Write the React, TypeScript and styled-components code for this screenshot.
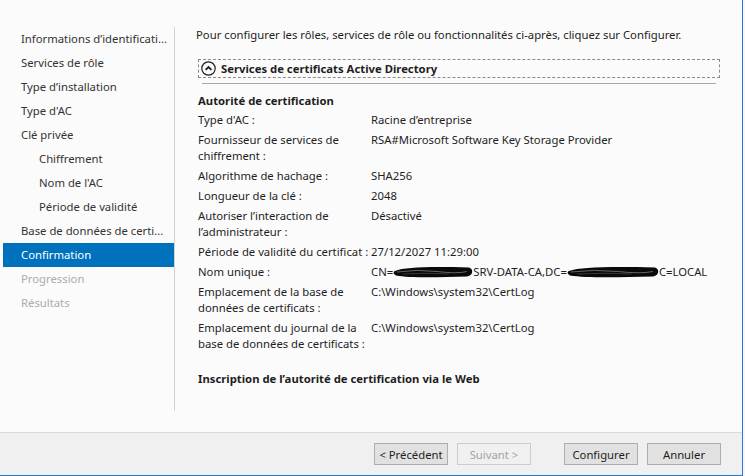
import React from 'react';
import styled, { createGlobalStyle } from 'styled-components';

const GlobalStyle = createGlobalStyle`
  html, body {
    margin: 0;
    padding: 0;
    background: #fbfbfb;
  }
  body {
    font-family: 'Noto Sans', 'Open Sans', sans-serif;
    font-size: 11.3px;
    color: #1e1e1e;
  }
`;

const Screen = styled.div`
  width: 745px;
  height: 476px;
  display: flex;
  background: #f7f7f7;
`;

const Window = styled.div`
  width: 742px;
  height: 475px;
  display: flex;
  flex-direction: column;
  background: #fbfbfb;
  border-right: 1px solid #1e7bd0;
  border-bottom: 1px solid #1e7bd0;
`;

const Main = styled.div`
  height: 432px;
  display: flex;
`;

const Nav = styled.ul`
  list-style: none;
  margin: 27px 0 0;
  padding: 0 0 0 3px;
  width: 171px;
  height: 384px;
  border-right: 1px solid #d3d3d3;
`;

const NavItem = styled.li<{ $sub?: boolean; $active?: boolean; $disabled?: boolean }>`
  height: 24px;
  line-height: 24px;
  padding-left: ${p => (p.$sub ? 36 : 18)}px;
  white-space: nowrap;
  background: ${p => (p.$active ? '#0071bc' : 'transparent')};
  color: ${p => (p.$active ? '#ffffff' : p.$disabled ? '#acacac' : '#333333')};
`;

const Content = styled.div`
  flex: 1;
  padding: 27px 22px 0 21px;
`;

const Intro = styled.div`
  line-height: 16px;
`;

const Section = styled.div`
  margin: 16px 0 0 2px;
`;

const SectionHead = styled.div`
  height: 17px;
  display: flex;
  align-items: center;
  gap: 5px;
  padding-left: 2px;
  border: 1px dashed #8a8a8a;
  font-weight: 700;
`;

const HeadRule = styled.div`
  height: 1px;
  margin: 5px 4px 0 4px;
  background: #a8a8a8;
`;

const GroupTitle = styled.div<{ $gap?: number }>`
  margin-top: ${p => p.$gap ?? 9}px;
  line-height: 16px;
  font-weight: 700;
`;

const Rows = styled.div`
  margin-top: 3px;
  display: flex;
  flex-direction: column;
  gap: 4px;
`;

const Row = styled.div`
  display: flex;
  align-items: flex-start;
  line-height: 16px;
`;

const Label = styled.div`
  width: 173px;
  flex: none;
`;

const Value = styled.div`
  height: 16px;
  white-space: nowrap;
  display: flex;
  align-items: center;
`;

const Scribble = styled.svg`
  flex: none;
  display: block;
`;

const Footer = styled.div`
  flex: 1;
  display: flex;
  justify-content: flex-end;
  align-items: flex-start;
  padding: 10px 21px 0 0;
  background: #f0f0f0;
  border-top: 1px solid #dadada;
`;

const Button = styled.button<{ $gap?: number }>`
  width: 74px;
  height: 22px;
  margin-left: ${p => p.$gap ?? 9}px;
  padding: 0;
  font: inherit;
  color: #1e1e1e;
  background: #e1e1e1;
  border: 1px solid #adadad;
  &:disabled {
    color: #a3a3a3;
    background: #f0f0f0;
    border-color: #cccccc;
  }
`;

const ExpandIcon = () => (
  <svg width="15" height="15" viewBox="0 0 15 15">
    <circle cx="7.5" cy="7.5" r="6.7" fill="none" stroke="#1e1e1e" strokeWidth="1.2" />
    <path d="M4.6 8.9 L7.5 6 L10.4 8.9" fill="none" stroke="#1e1e1e" strokeWidth="1.8" />
  </svg>
);

// hand-drawn marker strokes hiding part of the distinguished name
const Blot = ({ w }: { w: number }) => (
  <Scribble width={w} height="14" viewBox={`0 0 ${w} 14`}>
    <path
      d={`M2 6 C ${w * 0.15} 2, ${w * 0.45} 1.5, ${w - 4} 2.5 C ${w + 1} 4, ${w} 11, ${w - 6} 11.5 C ${w * 0.55} 12.5, ${w * 0.2} 13, 3 10.5 C 0 9, 0 7, 2 6 Z`}
      fill="#0a0a0a"
    />
    <path
      d={`M4 7 Q ${w * 0.3} 4 ${w * 0.55} 6.5 T ${w - 6} 6.5`}
      stroke="#6e6e6e"
      strokeWidth="0.9"
      fill="none"
    />
    <path
      d={`M10 9 Q ${w * 0.4} 7.5 ${w * 0.7} 9`}
      stroke="#4a4a4a"
      strokeWidth="0.7"
      fill="none"
    />
  </Scribble>
);

const steps = [
  { label: 'Informations d\u2019identificati...' },
  { label: 'Services de rôle' },
  { label: 'Type d\u2019installation' },
  { label: "Type d'AC" },
  { label: 'Clé privée' },
  { label: 'Chiffrement', sub: true },
  { label: "Nom de l'AC", sub: true },
  { label: 'Période de validité', sub: true },
  { label: 'Base de données de certi...' },
  { label: 'Confirmation', active: true },
  { label: 'Progression', disabled: true },
  { label: 'Résultats', disabled: true },
];

const rows: [string, React.ReactNode][] = [
  ["Type d'AC :", 'Racine d\u2019entreprise'],
  ['Fournisseur de services de chiffrement :', 'RSA#Microsoft Software Key Storage Provider'],
  ['Algorithme de hachage :', 'SHA256'],
  ['Longueur de la clé :', '2048'],
  ['Autoriser l\u2019interaction de l\u2019administrateur :', 'Désactivé'],
  ['Période de validité du certificat :', '27/12/2027 11:29:00'],
  [
    'Nom unique :',
    <>
      CN=
      <Blot w={80} />
      SRV-DATA-CA,DC=
      <Blot w={92} />
      C=LOCAL
    </>,
  ],
  ['Emplacement de la base de données de certificats :', 'C:\\Windows\\system32\\CertLog'],
  ['Emplacement du journal de la base de données de certificats :', 'C:\\Windows\\system32\\CertLog'],
];

export default function App() {
  return (
    <>
      <GlobalStyle />
      <Screen>
        <Window>
          <Main>
            <Nav>
              {steps.map(s => (
                <NavItem key={s.label} $sub={s.sub} $active={s.active} $disabled={s.disabled}>
                  {s.label}
                </NavItem>
              ))}
            </Nav>
            <Content>
              <Intro>
                Pour configurer les rôles, services de rôle ou fonctionnalités ci-après, cliquez sur Configurer.
              </Intro>
              <Section>
                <SectionHead>
                  <ExpandIcon />
                  Services de certificats Active Directory
                </SectionHead>
                <HeadRule />
                <GroupTitle>Autorité de certification</GroupTitle>
                <Rows>
                  {rows.map(([label, value]) => (
                    <Row key={label}>
                      <Label>{label}</Label>
                      <Value>{value}</Value>
                    </Row>
                  ))}
                </Rows>
                <GroupTitle $gap={19}>
                  Inscription de l’autorité de certification via le Web
                </GroupTitle>
              </Section>
            </Content>
          </Main>
          <Footer>
            <Button>&lt; Précédent</Button>
            <Button disabled>Suivant &gt;</Button>
            <Button $gap={33}>Configurer</Button>
            <Button>Annuler</Button>
          </Footer>
        </Window>
      </Screen>
    </>
  );
}
